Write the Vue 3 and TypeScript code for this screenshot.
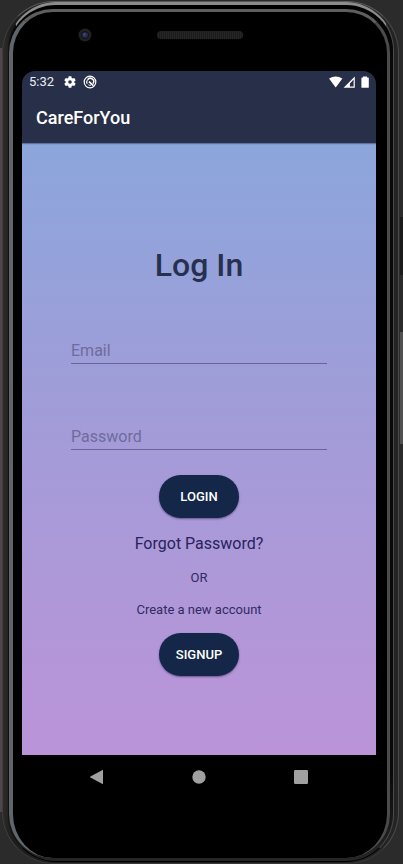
<script setup lang="ts">
import { ref } from 'vue'

const email = ref<string>('')
const password = ref<string>('')
</script>

<template>
  <div class="stage">
    <i class="side left-edge"></i>
    <i class="side power"></i>
    <i class="side volume"></i>
    <div class="shell">
      <div class="rim">
        <div class="body">
          <div class="hardware">
            <svg class="camera" viewBox="0 0 14 14" aria-hidden="true">
              <circle cx="7" cy="7" r="6.5" fill="#222225" />
              <circle cx="7" cy="7" r="4.2" fill="#15161f" />
              <circle cx="7" cy="7" r="2.8" fill="#2b2d55" />
              <circle cx="6.4" cy="6.6" r="1" fill="#4a5288" />
            </svg>
            <div class="speaker"></div>
          </div>

          <div class="screen">
            <header class="top">
              <div class="status">
                <span class="clock">5:32</span>
                <svg class="gear" viewBox="2 2 20 20" aria-hidden="true">
                  <path fill="#fff" d="M19.14 12.94c.04-.3.06-.61.06-.94 0-.32-.02-.64-.07-.94l2.03-1.58c.18-.14.23-.41.12-.61l-1.92-3.32c-.12-.22-.37-.29-.59-.22l-2.39.96c-.5-.38-1.03-.7-1.62-.94l-.36-2.54c-.04-.24-.24-.41-.48-.41h-3.84c-.24 0-.43.17-.47.41l-.36 2.54c-.59.24-1.13.57-1.62.94l-2.39-.96c-.22-.08-.47 0-.59.22L2.74 8.87c-.12.21-.08.47.12.61l2.03 1.58c-.05.3-.09.63-.09.94s.02.64.07.94l-2.03 1.58c-.18.14-.23.41-.12.61l1.92 3.32c.12.22.37.29.59.22l2.39-.96c.5.38 1.03.7 1.62.94l.36 2.54c.05.24.24.41.48.41h3.84c.24 0 .44-.17.47-.41l.36-2.54c.59-.24 1.13-.56 1.62-.94l2.39.96c.22.08.47 0 .59-.22l1.92-3.32c.12-.22.07-.47-.12-.61l-2.01-1.58zM12 15a3 3 0 1 1 0-6 3 3 0 0 1 0 6z" />
                </svg>
                <svg class="ring" viewBox="0 0 14 14" aria-hidden="true">
                  <circle cx="7" cy="7" r="5.8" fill="none" stroke="#fff" stroke-width="1.2" />
                  <path d="M4.2 8.8A3.3 3.3 0 0 1 4.4 5" fill="none" stroke="#fff" stroke-width="1.2" />
                  <path d="M4.6 4.7A3.3 3.3 0 0 1 10 8.6" fill="none" stroke="#fff" stroke-width="1.5" />
                  <path d="M6 6.6L10.4 10.6" stroke="#fff" stroke-width="1.7" />
                  <path d="M5.4 9.8A3.3 3.3 0 0 0 8 10.2" fill="none" stroke="#fff" stroke-width="1" />
                </svg>
                <span class="spacer"></span>
                <svg class="signals" viewBox="0 0 40 12" aria-hidden="true">
                  <path d="M0 2.6Q6.7 -1.8 13.4 2.6L6.7 11.4Z" fill="#fff" />
                  <path fill-rule="evenodd" d="M14.6 11.8L25.8 .4V11.8ZM20.9 10.6H24.6V3.6L20.9 7.4Z" fill="#fff" />
                  <path d="M34 .4h4v1.2h1.2q.6 0 .6 .6v9q0 .6-.6 .6h-6.2q-.6 0-.6-.6v-9q0-.6 .6-.6h1Z" fill="#fff" />
                </svg>
              </div>
              <div class="appbar">CareForYou</div>
            </header>

            <main>
              <form class="form" @submit.prevent>
                <h1>Log In</h1>
                <input v-model="email" class="field" type="email" placeholder="Email" aria-label="Email" />
                <input v-model="password" class="field second" type="password" placeholder="Password" aria-label="Password" />
                <button class="pill" type="submit">LOGIN</button>
                <a class="forgot" href="#">Forgot Password?</a>
                <p class="or">OR</p>
                <p class="create">Create a new account</p>
                <button class="pill" type="button">SIGNUP</button>
              </form>
            </main>
          </div>

          <nav class="softkeys">
            <button type="button" aria-label="Back">
              <svg viewBox="0 0 16 16"><path d="M14 .8V15.2L1.4 8.6Q.6 8 1.4 7.4Z" fill="#a0a0a0" /></svg>
            </button>
            <button type="button" aria-label="Home">
              <svg viewBox="0 0 16 16"><circle cx="8" cy="8" r="6.7" fill="#a0a0a0" /></svg>
            </button>
            <button type="button" aria-label="Overview">
              <svg viewBox="0 0 16 16"><rect x="1" y="1" width="14" height="14" rx="1.2" fill="#a0a0a0" /></svg>
            </button>
          </nav>
        </div>
      </div>
    </div>
  </div>
</template>

<style>
body {
  margin: 0;
  background: #2b2b2b;
}
</style>

<style scoped>
.stage {
  position: relative;
  box-sizing: border-box;
  min-height: 100vh;
  padding: 1px 4px 0 2px;
  display: flex;
  background: #2b2b2b;
  font-family: Roboto, "Liberation Sans", sans-serif;
}
.side {
  position: absolute;
}
.left-edge {
  left: 0;
  top: 48px;
  width: 2px;
  height: 764px;
  background: #4d494b;
}
.power {
  right: 0;
  top: 217px;
  width: 3px;
  height: 58px;
  background: #1c1b1b;
}
.volume {
  right: 0;
  top: 332px;
  width: 3px;
  height: 112px;
  background: #505050;
}
.shell {
  flex: 1;
  display: flex;
  box-sizing: border-box;
  padding: 0 4px 1px 5px;
  border: 1px solid;
  border-color: #5a5a5a #4a4a4a #383838 #3f3d3d;
  border-radius: 52px;
  background: linear-gradient(90deg, #2d2c2a 0, #1f1e1d 8px, #1f1f1f 50%, #242424 100%);
}
.rim {
  flex: 1;
  display: flex;
  padding: 4px 3px 0 0;
  border: 1px solid;
  border-width: 3px 1px 1px 1px;
  border-color: #8c8c8c #4a4a4a #000 #111;
  border-radius: 48px;
  background: linear-gradient(#000 0, #0a0a0a 60px, #0a0a0a 90%, #262626 100%);
}
.body {
  flex: 1;
  display: flex;
  flex-direction: column;
  margin-bottom: 3px;
  padding: 0 11px 0 9px;
  border: solid;
  border-width: 3px 3px 0 4px;
  border-color: #5e5e5e #4b4b4b #000 #60656c;
  border-radius: 44px;
  background: #000;
}
.hardware {
  display: flex;
  align-items: center;
  height: 45px;
  padding: 0 0 14px 56px;
}
.camera {
  width: 14px;
  height: 14px;
}
.speaker {
  width: 86px;
  height: 8px;
  margin-left: 65px;
  border-radius: 4px;
  background: repeating-linear-gradient(90deg, #1c1c1c 0 1px, #262626 1px 2px);
}
.screen {
  flex: 1;
  display: flex;
  flex-direction: column;
  overflow: hidden;
  border-radius: 13px 13px 0 0;
}
.top {
  position: relative;
  background: #282f48;
  box-shadow: 0 1px 1px rgba(30, 35, 70, 0.4);
}
.status {
  display: flex;
  align-items: center;
  height: 22px;
  padding: 0 7px;
}
.clock {
  margin-right: 10px;
  color: #eceef5;
  font-size: 13px;
  line-height: 22px;
}
.gear {
  width: 12px;
  height: 12px;
  margin-right: 7px;
}
.ring {
  width: 14px;
  height: 14px;
}
.spacer {
  flex: 1;
}
.signals {
  width: 40px;
  height: 12px;
}
.appbar {
  padding: 0 14px;
  color: #fff;
  font-size: 18px;
  font-weight: 500;
  line-height: 50px;
}
main {
  flex: 1;
  background: linear-gradient(#8ca6dc, #a49bd8 50%, #bb94d8);
}
.form {
  display: flex;
  flex-direction: column;
  align-items: center;
  padding: 102px 49px 0;
}
h1 {
  margin: 0;
  color: #27304f;
  font-size: 32px;
  font-weight: 500;
  line-height: 40px;
}
.field {
  box-sizing: border-box;
  width: 100%;
  height: 32px;
  margin-top: 47px;
  padding: 6px 0 0;
  border: 0;
  border-bottom: 1px solid #6a6496;
  border-radius: 0;
  outline: 0;
  background: none;
  color: #27304f;
  font: 16px Roboto, "Liberation Sans", sans-serif;
}
.field.second {
  margin-top: 54px;
}
.field::placeholder {
  color: #706b9b;
  opacity: 1;
}
.pill {
  width: 80px;
  height: 43px;
  margin-top: 25px;
  padding: 0;
  border: 0;
  border-radius: 22px;
  background: #152748;
  box-shadow: 0 1px 2px rgba(30, 20, 70, 0.5);
  color: #fff;
  font: 500 13px Roboto, "Liberation Sans", sans-serif;
}
.forgot {
  margin-top: 16px;
  color: #27235c;
  font-size: 16px;
  line-height: 20px;
  text-decoration: none;
}
.or,
.create {
  margin: 16px 0 0;
  color: #302b62;
  font-size: 13px;
  line-height: 16px;
}
.create + .pill {
  margin-top: 15px;
}
.softkeys {
  display: flex;
  justify-content: space-around;
  align-items: center;
  height: 44px;
  padding: 0 24px;
  margin-bottom: 59px;
}
.softkeys button {
  display: flex;
  padding: 0;
  border: 0;
  background: none;
}
.softkeys svg {
  width: 16px;
  height: 16px;
}
</style>
